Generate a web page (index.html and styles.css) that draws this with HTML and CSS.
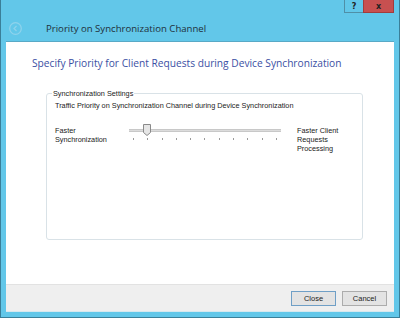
FILE: index.html
```html
<!DOCTYPE html>
<html lang="en">
    <head>
        <meta charset="UTF-8">
        <title>Priority on Synchronization Channel</title>
        <link rel="stylesheet" href="styles.css">
    </head>

    <body>
        <div class="window">
            <div class="titlebar">
                <div class="caption_buttons">
                    <button class="help">?</button>
                    <button class="close_x">x</button>
                </div>
                <div class="nav">
                    <span class="back">
                        <svg width="13" height="13" viewBox="0 0 13 13">
                            <circle cx="6.5" cy="6.5" r="5.8" fill="none" stroke="#8fd3ec" stroke-width="1.2"/>
                            <path d="M7.5 4 L5 6.5 L7.5 9" fill="none" stroke="#8fd3ec" stroke-width="1.2"/>
                        </svg>
                    </span>
                    <span class="title">Priority on Synchronization Channel</span>
                </div>
            </div>

            <div class="content">
                <div class="heading">Specify Priority for Client Requests during Device Synchronization</div>

                <fieldset class="group">
                    <legend>Synchronization Settings</legend>
                    <div class="caption">Traffic Priority on Synchronization Channel during Device Synchronization</div>
                    <div class="slider_row">
                        <div class="label_left">Faster<br>Synchronization</div>
                        <div class="slider">
                            <div class="track"></div>
                            <svg class="thumb" width="8" height="12" viewBox="0 0 8 12">
                                <path d="M0.5 0.5 H7.5 V8.5 L4 11.5 L0.5 8.5 Z" fill="#e6e6e6" stroke="#8a8a8a" stroke-width="1"/>
                            </svg>
                            <div class="ticks">
                                <span></span><span></span><span></span><span></span><span></span><span></span>
                                <span></span><span></span><span></span><span></span><span></span>
                            </div>
                        </div>
                        <div class="label_right">Faster Client<br>Requests<br>Processing</div>
                    </div>
                </fieldset>
            </div>

            <div class="footer">
                <button class="btn btn_default">Close</button>
                <button class="btn">Cancel</button>
            </div>
        </div>
    </body>
</html>
```

FILE: styles.css
```css
*{
    box-sizing: border-box;
}
body {
    margin: 0;
    overflow: hidden;
    font-family: "Liberation Sans", Arial, sans-serif;
}
.window{
    display: flex;
    flex-direction: column;
    width: 400px;
    height: 318px;
    background-color: #62c7e9;
    border: 1px solid #3a7f99;
    border-top: none;
    padding: 0 5px 5px 5px;
}
.titlebar{
    height: 41px;
    display: flex;
    flex-direction: column;
}
.caption_buttons{
    display: flex;
    justify-content: flex-end;
    height: 13px;
}
.caption_buttons button{
    height: 13px;
    padding: 0;
    border: 1px solid #4f8fa7;
    border-top: none;
    font-family: "DejaVu Sans", sans-serif;
    font-size: 8px;
    font-weight: bold;
    line-height: 11px;
    color: #222;
}
.help{
    width: 19px;
    background-color: #62c7e9;
    border-right: none !important;
}
.close_x{
    width: 31px;
    background-color: #c75050;
    border-color: #a33c3c !important;
}
.nav{
    display: flex;
    align-items: center;
    height: 28px;
}
.back{
    display: flex;
    margin-left: 3px;
    margin-top: 3px;
}
.title{
    margin-left: 24px;
    margin-top: 3px;
    font-family: "Open Sans", sans-serif;
    font-size: 9.6px;
    color: #1f2f3a;
}
.content{
    flex: 1;
    background-color: white;
    border-top: 1px solid #58a9c6;
    padding: 14px 0 0 26px;
}
.heading{
    font-family: "Open Sans", sans-serif;
    font-size: 10.2px;
    color: #3b4fa3;
    height: 16px;
}
.group{
    margin: 17px 0 0 14px;
    width: 317px;
    height: 151px;
    border: 1px solid #d9e2e7;
    border-radius: 3px;
    padding: 0 0 0 8px;
    font-size: 7.3px;
    color: #222;
}
.group legend{
    padding: 0 1px;
    margin-left: -3px;
}
.caption{
    margin-top: 3px;
}
.slider_row{
    display: flex;
    margin-top: 16px;
}
.label_left{
    width: 74px;
    line-height: 9px;
}
.slider{
    position: relative;
    width: 152px;
    height: 20px;
}
.track{
    margin-top: 3px;
    height: 3px;
    background-color: #dcdcdc;
    border: 1px solid #c8c8c8;
    border-width: 1px 0;
}
.thumb{
    position: absolute;
    left: 14px;
    top: -2px;
}
.ticks{
    display: flex;
    justify-content: space-between;
    margin: 6px 4px 0 4px;
}
.ticks span{
    width: 1px;
    height: 2px;
    background-color: #9a9a9a;
}
.label_right{
    margin-left: 16px;
    line-height: 9px;
}
.footer{
    height: 28px;
    background-color: #efefef;
    border-top: 1px solid #e2e2e2;
    border-bottom: 1px solid #d7e8ee;
    display: flex;
    justify-content: flex-end;
    align-items: center;
    gap: 6px;
    padding-right: 7px;
    padding-top: 1px;
}
.btn{
    width: 45px;
    height: 15px;
    padding: 0;
    background-color: #e3e3e3;
    border: 1px solid #acacac;
    font-family: "Liberation Sans", sans-serif;
    font-size: 7.5px;
    color: #222;
}
.btn_default{
    border-color: #6f9fc6;
}
```
